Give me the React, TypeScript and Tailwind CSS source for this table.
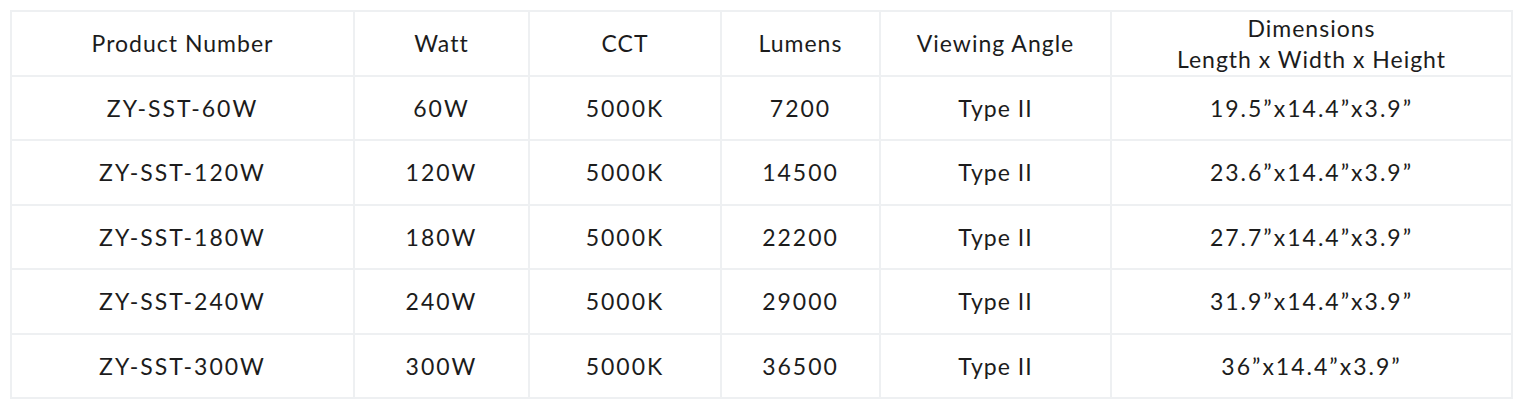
const headers = ["Product Number", "Watt", "CCT", "Lumens", "Viewing Angle"];

const rows = [
  ["ZY-SST-60W", "60W", "5000K", "7200", "Type II", "19.5\u201dx14.4\u201dx3.9\u201d"],
  ["ZY-SST-120W", "120W", "5000K", "14500", "Type II", "23.6\u201dx14.4\u201dx3.9\u201d"],
  ["ZY-SST-180W", "180W", "5000K", "22200", "Type II", "27.7\u201dx14.4\u201dx3.9\u201d"],
  ["ZY-SST-240W", "240W", "5000K", "29000", "Type II", "31.9\u201dx14.4\u201dx3.9\u201d"],
  ["ZY-SST-300W", "300W", "5000K", "36500", "Type II", "36\u201dx14.4\u201dx3.9\u201d"],
];

export default function App() {
  return (
    <div className="w-[1524px] h-[411px] bg-white pt-[10px] pl-[10px] font-['Lato',sans-serif] text-[#1c1c1c] tracking-[1px]">
      <div className="w-[1503px] grid grid-cols-[341px_173px_190px_157px_229px_399px] grid-rows-[63px_repeat(5,62.4px)] gap-[2px] p-[2px] bg-[#eef0f2]">
        {headers.map((h) => (
          <div key={h} className="bg-white flex items-center justify-center text-[23px]">
            {h}
          </div>
        ))}
        <div className="bg-white flex flex-col items-center justify-center text-[23px] leading-[31px]">
          <span>Dimensions</span>
          <span>Length x Width x Height</span>
        </div>
        {rows.map((r) =>
          r.map((c, i) => (
            <div
              key={r[0] + i}
              className={
                i === 4
                  ? "bg-white flex items-center justify-center text-[23px]"
                  : "bg-white flex items-center justify-center text-[23px] tracking-[2px]"
              }
            >
              {c}
            </div>
          ))
        )}
      </div>
    </div>
  );
}
